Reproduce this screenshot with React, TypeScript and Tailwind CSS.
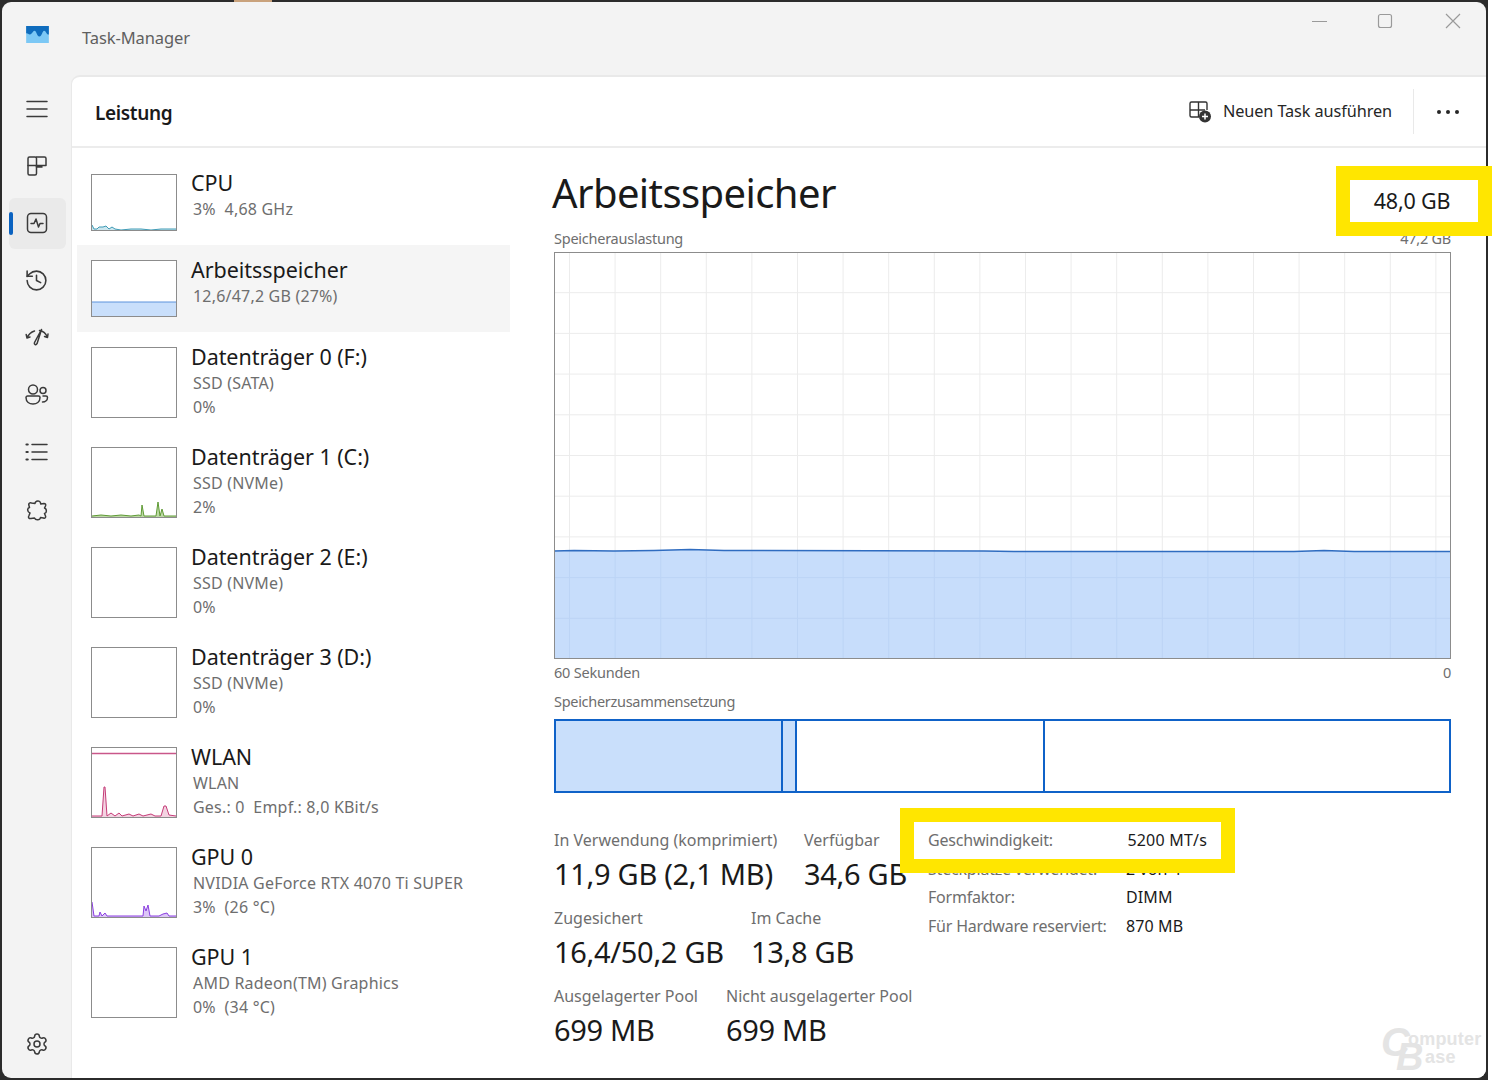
import { History, Settings } from "lucide-react";
import type { ReactNode } from "react";

const font = { fontFamily: '"Noto Sans", "Open Sans", sans-serif' };

type Spark = { stroke: string; fill: string; line: string };

const Thumb = ({ h, children }: { h: number; children?: ReactNode }) => (
  <svg width="86" height={h} viewBox={`0 0 86 ${h}`} className="shrink-0 block bg-white">
    {children}
    <rect x="0.5" y="0.5" width="85" height={h - 1} fill="none" stroke="#8c8c8c" />
  </svg>
);

const Sparkline = ({ h, line, stroke, fill }: Spark & { h: number }) => (
  <>
    <polygon points={`1,${h - 1} ${line} 85,${h - 1}`} fill={fill} />
    <polyline points={line} fill="none" stroke={stroke} strokeWidth="1" />
  </>
);

const rows = [
  {
    title: "CPU",
    lines: ["3%  4,68 GHz"],
    h: 57,
    rowH: "h-[86px]",
    textGap: "mb-[14px]",
    thumb: (
      <Sparkline
        h={57}
        stroke="#3f9ab5"
        fill="#cbe6ee"
        line="1,51 3,55 6,55 8,53 12,53 15,52 18,55 21,53 24,55 30,56 40,55 50,55 60,56 70,55 85,55"
      />
    ),
  },
  {
    title: "Arbeitsspeicher",
    lines: ["12,6/47,2 GB (27%)"],
    h: 57,
    rowH: "h-[87px] bg-[#f5f5f5]",
    textGap: "mb-[14px]",
    thumb: (
      <>
        <rect x="1" y="42" width="84" height="14" fill="#c9dffb" />
        <line x1="1" y1="42" x2="85" y2="42" stroke="#5d93dc" />
      </>
    ),
  },
  { title: "Datenträger 0 (F:)", lines: ["SSD (SATA)", "0%"], h: 71, rowH: "h-[100px]", textGap: "mb-[2px]" },
  {
    title: "Datenträger 1 (C:)",
    lines: ["SSD (NVMe)", "2%"],
    h: 71,
    rowH: "h-[100px]",
    textGap: "mb-[2px]",
    thumb: (
      <Sparkline
        h={71}
        stroke="#5f9a35"
        fill="#bcd9a4"
        line="1,69 10,68 20,69 30,68 40,69 48,68 50,69 51,58 53,69 65,69 67,55 69,69 71,62 73,69 85,69"
      />
    ),
  },
  { title: "Datenträger 2 (E:)", lines: ["SSD (NVMe)", "0%"], h: 71, rowH: "h-[100px]", textGap: "mb-[2px]" },
  { title: "Datenträger 3 (D:)", lines: ["SSD (NVMe)", "0%"], h: 71, rowH: "h-[100px]", textGap: "mb-[2px]" },
  {
    title: "WLAN",
    lines: ["WLAN", "Ges.: 0  Empf.: 8,0 KBit/s"],
    h: 71,
    rowH: "h-[100px]",
    textGap: "mb-[2px]",
    thumb: (
      <>
        <line x1="1" y1="6.5" x2="85" y2="6.5" stroke="#c9578a" strokeWidth="1.5" />
        <Sparkline
          h={71}
          stroke="#c53c78"
          fill="#f3d3e1"
          line="1,69 11,69 13,40 14,40 16,69 20,66 24,69 28,66 31,69 38,67 42,69 48,67 52,69 60,67 64,69 70,69 73,59 75,59 78,68 85,69"
        />
      </>
    ),
  },
  {
    title: "GPU 0",
    lines: ["NVIDIA GeForce RTX 4070 Ti SUPER", "3%  (26 °C)"],
    h: 71,
    rowH: "h-[100px]",
    textGap: "mb-[2px]",
    thumb: (
      <Sparkline
        h={71}
        stroke="#8a3fe0"
        fill="#dcc6f7"
        line="1,55 3,69 8,69 9,65 11,69 14,66 16,69 36,69 38,69 52,69 53,59 55,64 57,58 59,69 68,69 72,67 76,66 78,69 85,69"
      />
    ),
  },
  {
    title: "GPU 1",
    lines: ["AMD Radeon(TM) Graphics", "0%  (34 °C)"],
    h: 71,
    rowH: "h-[100px]",
    textGap: "mb-[2px]",
  },
];

const NavIcon = ({ children, active }: { children: ReactNode; active?: boolean }) => (
  <div
    className={`relative w-[57px] h-[51px] pr-[2px] rounded-md flex items-center justify-center text-[#3a3a3a] ${
      active ? "bg-[#eaeaea]" : ""
    }`}
  >
    {active && <div className="absolute left-0 top-[14px] w-[4px] h-[23px] rounded-full bg-[#0a62c0]" />}
    {children}
  </div>
);

const Icon = ({ children }: { children: ReactNode }) => (
  <svg width="24" height="24" viewBox="0 0 24 24" fill="none" stroke="#3a3a3a" strokeWidth="1.5" strokeLinecap="round" strokeLinejoin="round">
    {children}
  </svg>
);

const Stat = ({ label, value, w }: { label: string; value: string; w: string }) => (
  <div className={`${w} shrink-0`}>
    <div className="text-[16px] leading-[20px] text-[#6e6e6e] whitespace-nowrap">{label}</div>
    <div className="mt-[5px] text-[29px] leading-[38px] text-[#1a1a1a] whitespace-nowrap tracking-[-0.3px]">{value}</div>
  </div>
);

const Spec = ({ label, value }: { label: string; value: string }) => (
  <div className="flex h-[28.5px] items-center text-[16px] tracking-[-0.2px]">
    <div className="w-[198px] text-[#6e6e6e] whitespace-nowrap">{label}</div>
    <div className="text-[#1a1a1a] whitespace-nowrap tracking-[0.1px]">{value}</div>
  </div>
);

const usageLine =
  "0,299 20,298.5 60,299 100,298.5 136,297.5 170,298.5 430,299 460,299.500 740,299.500 770,298.500 800,299.500 896,299.500";

const MemoryChart = () => (
  <svg width="897" height="407" viewBox="0 0 897 407" className="block bg-white">
    {Array.from({ length: 9 }, (_, i) => (
      <line key={i} x1="0" x2="897" y1={40.7 * (i + 1)} y2={40.7 * (i + 1)} stroke="#ececec" />
    ))}
    {Array.from({ length: 20 }, (_, i) => (
      <line key={i} x1={15.5 + 45.6 * i} x2={15.5 + 45.6 * i} y1="0" y2="407" stroke="#ececec" />
    ))}
    <polygon points={`0,407 ${usageLine} 897,407`} fill="#c7ddfb" />
    {Array.from({ length: 20 }, (_, i) => (
      <line key={i} x1={15.5 + 45.6 * i} x2={15.5 + 45.6 * i} y1="299" y2="407" stroke="#bcd4f5" />
    ))}
    {[8, 9].map((i) => (
      <line key={i} x1="0" x2="897" y1={40.7 * i} y2={40.7 * i} stroke="#bcd4f5" />
    ))}
    <polyline points={usageLine} fill="none" stroke="#2f6cc0" strokeWidth="1.5" />
    <rect x="0.5" y="0.5" width="896" height="406" fill="none" stroke="#8c8c8c" />
  </svg>
);

export default function App() {
  return (
    <div className="relative w-[1492px] h-[1080px] bg-white overflow-hidden" style={font}>
      <div className="w-[1488px] h-[1080px] bg-[#2b2b2b] p-[2px]">
        <div className="h-full rounded-[9px] overflow-hidden bg-[#f3f3f3] flex flex-col">
          {/* title bar */}
          <div className="h-[73px] shrink-0 flex items-start relative">
            <svg width="23" height="17" viewBox="0 0 24 18" className="ml-[24px] mt-[24px] shrink-0">
              <rect width="24" height="18" fill="#7cc8f5" />
              <path d="M0 0h24v9c-2 1-3-4-5-4s-2 6-5 6-3-6-5-6-3 4-5 4-3-2-4-1z" fill="#0f6cbd" />
            </svg>
            <div className="ml-[33px] mt-[24px] text-[16.5px] leading-[24px] text-[#5f5f5f] tracking-[-0.1px]">Task-Manager</div>
            <div className="ml-auto flex items-start">
              <svg width="150" height="30" viewBox="0 0 150 30" className="mt-[5px]" fill="none" stroke="#9a9a9a" strokeWidth="1.2">
                <line x1="0" y1="14.5" x2="15" y2="14.5" />
                <rect x="66.5" y="7.5" width="13" height="13" rx="2" />
                <path d="M134 7l14 14M148 7l-14 14" />
              </svg>
              <div className="w-[24px]" />
            </div>
          </div>

          <div className="flex-1 flex min-h-0">
            {/* sidebar */}
            <div className="w-[69px] shrink-0 flex flex-col gap-[6.3px] pl-[7px] pt-[8px] pb-[9px]">
              <NavIcon>
                <Icon>
                  <path d="M2 4.5h20M2 12h20M2 19.5h20" />
                </Icon>
              </NavIcon>
              <NavIcon>
                <Icon>
                  <rect x="3" y="3" width="8.5" height="18" rx="1.5" />
                  <path d="M11.5 3H19.5a1.5 1.5 0 0 1 1.5 1.5V11.5H3M11.5 11.5V13H17" />
                </Icon>
              </NavIcon>
              <NavIcon active>
                <Icon>
                  <rect x="2.5" y="2.5" width="19" height="19" rx="3.5" />
                  <path d="M6 12.5h3l2-4.5 2.5 8 1.5-3.5h3" />
                </Icon>
              </NavIcon>
              <NavIcon>
                <History size={25} strokeWidth={1.5} />
              </NavIcon>
              <NavIcon>
                <Icon>
                  <path d="M2 12c1.500-3.500 4-6 7.500-7M1.200 8.500l.8 3.500 3-1" />
                  <path d="M14.500 4.500c3.500 .5 6.500 3 8 7M23 8l-.5 3.500-3-1" />
                  <path d="M16.500 3.500L9.500 16.500c-.8 2 1.500 3 2.500 1.200z" />
                </Icon>
              </NavIcon>
              <NavIcon>
                <Icon>
                  <circle cx="8" cy="6.500" r="4.500" />
                  <path d="M2.500 13h11a1.500 1.500 0 0 1 1.500 1.500c0 4.500-3.500 6.500-7 6.500s-7-2-7-6.500A1.500 1.500 0 0 1 2.500 13z" />
                  <circle cx="18" cy="7.500" r="3" />
                  <path d="M18 13h3a1.500 1.500 0 0 1 1.500 1.500c0 2.500-2 4.500-5 4.500" />
                </Icon>
              </NavIcon>
              <NavIcon>
                <Icon>
                  <path d="M7 4.500h15M7 12h15M7 19.500h15" />
                  <path d="M1.500 4.500h1.200M1.500 12h1.200M1.500 19.500h1.200" strokeWidth="2.200" />
                </Icon>
              </NavIcon>
              <NavIcon>
                <Icon>
                  <path d="M10 5.500C10.500 2.500 15 2 15.500 5L15.800 6L19 5.500C20.500 5.500 21 6.500 20.500 8L19.500 10C22 11 22 15 19.500 15.500L20.500 18C21 19.500 20 20.500 18.500 20L15.500 19.500C15 22.500 10.500 22.500 9.500 20L6 20.500C4 21 3 19.500 3.800 18L5 15C2 14 2 10 4.500 9.500L3.800 7C3.500 5 5 4.500 6.500 5Z" />
                </Icon>
              </NavIcon>
              <div className="mt-auto">
                <NavIcon>
                  <Settings size={24} strokeWidth={1.5} />
                </NavIcon>
              </div>
            </div>

            {/* content */}
            <div className="flex-1 min-w-0 flex flex-col bg-white rounded-tl-[9px] border-t-2 border-l border-[#e9e9e9]">
              <div className="h-[71px] shrink-0 border-b-2 border-[#ececec] flex items-center pl-[23px] pr-[27px]">
                <div className="pt-[3px] text-[19px] font-semibold text-[#1a1a1a] tracking-[-0.35px]">Leistung</div>
                <div className="ml-auto flex items-center">
                  <svg width="24" height="24" viewBox="0 0 24 24" fill="none" stroke="#333" strokeWidth="1.4">
                    <path d="M11 17H3.500A1.500 1.500 0 0 1 2 15.500V3.500A1.500 1.500 0 0 1 3.500 2h14A1.500 1.500 0 0 1 19 3.500V10M10.500 2v15M2 10h15" />
                    <circle cx="17" cy="16.500" r="6" fill="#333" stroke="none" />
                    <path d="M17 13.500v6M14 16.500h6" stroke="#fff" strokeWidth="1.500" />
                  </svg>
                  <div className="ml-[11px] text-[16.3px] text-[#262626] tracking-[-0.1px]">Neuen Task ausführen</div>
                  <div className="ml-[21px] w-px h-[45px] bg-[#e9e9e9]" />
                  <div className="ml-[23px] flex gap-[5px]">
                    <div className="w-[4px] h-[4px] rounded-full bg-[#262626]" />
                    <div className="w-[4px] h-[4px] rounded-full bg-[#262626]" />
                    <div className="w-[4px] h-[4px] rounded-full bg-[#262626]" />
                  </div>
                </div>
              </div>

              <div className="flex-1 flex min-h-0">
                {/* device list */}
                <div className="w-[433px] ml-[5px] shrink-0 pt-[11px]">
                  {rows.map((r) => (
                    <div key={r.title} className={`${r.rowH} flex items-center pl-[14px]`}>
                      <Thumb h={r.h}>{r.thumb}</Thumb>
                      <div className={`ml-[14px] min-w-0 ${r.textGap}`}>
                        <div className="text-[21.5px] leading-[28px] text-[#1a1a1a] whitespace-nowrap tracking-[-0.05px]">{r.title}</div>
                        {r.lines.map((l) => (
                          <div key={l} className="ml-[2px] text-[16px] leading-[24px] text-[#6e6e6e] whitespace-pre tracking-[0.2px]">
                            {l}
                          </div>
                        ))}
                      </div>
                    </div>
                  ))}
                </div>

                {/* detail */}
                <div className="flex-1 min-w-0 pl-[44px] pr-[35px]">
                  <div className="mt-[19px] -ml-[2px] h-[52px] text-[40px] leading-[52px] text-[#1a1a1a] tracking-[-0.6px] whitespace-nowrap">
                    Arbeitsspeicher
                  </div>
                  <div className="mt-[9px] flex justify-between text-[14.5px] leading-[20px] text-[#6e6e6e] tracking-[-0.25px]">
                    <div>Speicherauslastung</div>
                    <div>47,2 GB</div>
                  </div>
                  <div className="mt-[4px]">
                    <MemoryChart />
                  </div>
                  <div className="mt-[3px] flex justify-between text-[14.5px] leading-[20px] text-[#6e6e6e] tracking-[-0.2px]">
                    <div>60 Sekunden</div>
                    <div>0</div>
                  </div>
                  <div className="mt-[9px] text-[14.5px] leading-[20px] text-[#6e6e6e] tracking-[-0.3px]">Speicherzusammensetzung</div>
                  <div className="mt-[8px] h-[74px] flex border-2 border-[#0f62c8]">
                    <div className="w-[227px] bg-[#c9dffb] border-r-2 border-[#0f62c8]" />
                    <div className="w-[14px] bg-[#c9dffb] border-r-2 border-[#0f62c8]" />
                    <div className="w-[248px] border-r-2 border-[#0f62c8]" />
                  </div>

                  <div className="mt-[37px] flex">
                    <div className="w-[374px] shrink-0 flex flex-col gap-[15px]">
                      <div className="flex">
                        <Stat w="w-[250px]" label="In Verwendung (komprimiert)" value="11,9 GB (2,1 MB)" />
                        <Stat w="w-[100px]" label="Verfügbar" value="34,6 GB" />
                      </div>
                      <div className="flex">
                        <Stat w="w-[197px]" label="Zugesichert" value="16,4/50,2 GB" />
                        <Stat w="w-[100px]" label="Im Cache" value="13,8 GB" />
                      </div>
                      <div className="flex">
                        <Stat w="w-[172px]" label="Ausgelagerter Pool" value="699 MB" />
                        <Stat w="w-[190px]" label="Nicht ausgelagerter Pool" value="699 MB" />
                      </div>
                    </div>
                    <div className="-mt-[4px]">
                      <Spec label="Geschwindigkeit:" value="5200 MT/s" />
                      <Spec label="Steckplätze verwendet:" value="2 von 4" />
                      <Spec label="Formfaktor:" value="DIMM" />
                      <Spec label="Für Hardware reserviert:" value="870 MB" />
                    </div>
                  </div>
                </div>
              </div>
            </div>
          </div>
        </div>
      </div>

      {/* desktop showing behind the window */}
      <div className="absolute left-[234px] top-0 w-[38px] h-[2px] bg-[#c9a27c]" />

      {/* yellow annotation boxes */}
      <div className="absolute left-[1336px] top-[166px] w-[156px] h-[70px] pr-[4px] border-[14px] border-[#ffe600] bg-white flex items-center justify-center text-[21.5px] text-[#1a1a1a] tracking-[-0.2px]">
        48,0 GB
      </div>
      <div className="absolute left-[900px] top-[808px] w-[335px] h-[65px] pb-[2px] border-[14px] border-[#ffe600] bg-white flex items-center justify-between pl-[14px] pr-[14px] text-[16px] tracking-[-0.2px]">
        <span className="text-[#6e6e6e]">Geschwindigkeit:</span>
        <span className="text-[#1a1a1a] tracking-[0.2px]">5200 MT/s</span>
      </div>

      {/* watermark */}
      <div className="absolute left-[1381px] top-[1024px] w-[104px] h-[48px] text-[#e4e4e4] font-bold" style={{ fontFamily: '"Liberation Sans", sans-serif' }}>
        <span className="absolute left-0 top-[-2px] text-[40px] leading-[40px] italic">C</span>
        <span className="absolute left-[27px] top-[4px] text-[18px] leading-[22px] tracking-[0.2px]">omputer</span>
        <span className="absolute left-[15px] top-[14px] text-[38px] leading-[38px] italic">B</span>
        <span className="absolute left-[44px] top-[22px] text-[18px] leading-[22px] tracking-[0.2px]">ase</span>
      </div>
    </div>
  );
}
